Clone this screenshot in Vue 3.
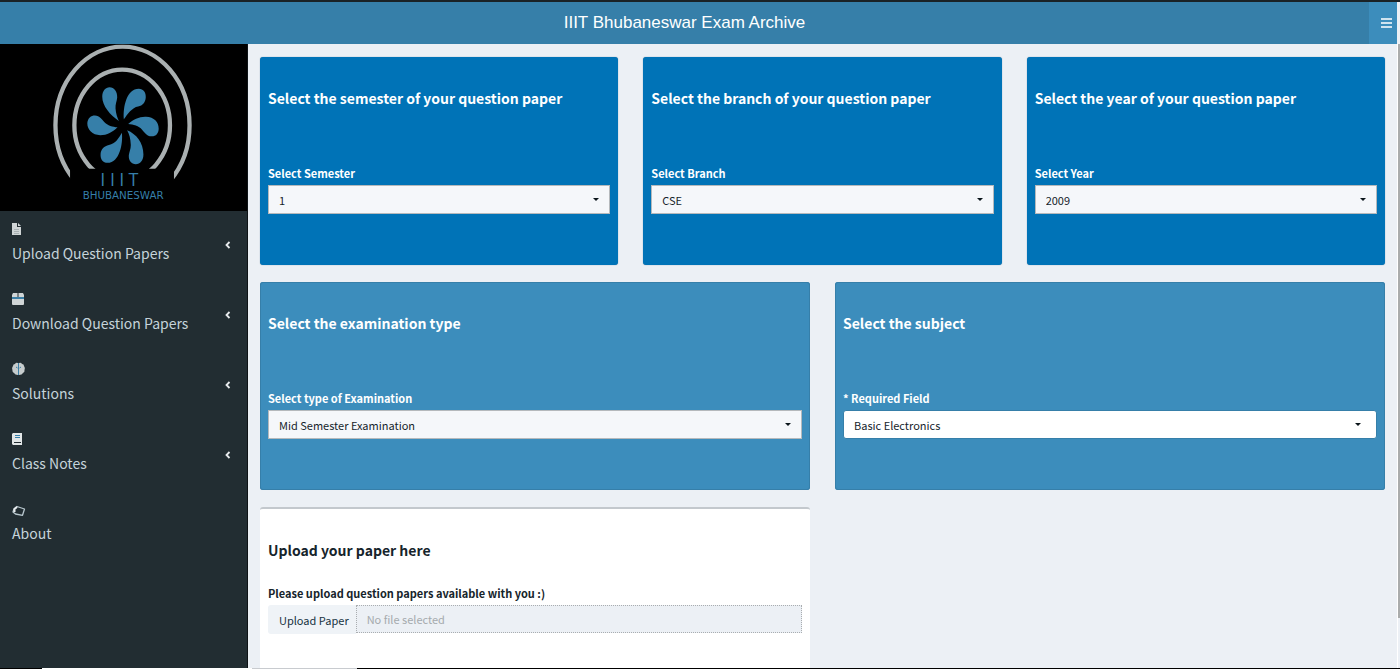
<script setup>
import { ref } from 'vue'

const menu = [
  { label: 'Upload Question Papers', icon: 'file', expandable: true },
  { label: 'Download Question Papers', icon: 'box', expandable: true },
  { label: 'Solutions', icon: 'brain', expandable: true },
  { label: 'Class Notes', icon: 'notes', expandable: true },
  { label: 'About', icon: 'tag', expandable: false },
]

const selectors = [
  { id: 'semester', title: 'Select the semester of your question paper', label: 'Select Semester', options: ['1', '2', '3', '4', '5', '6', '7', '8'], tone: 'blue' },
  { id: 'branch', title: 'Select the branch of your question paper', label: 'Select Branch', options: ['CSE', 'IT', 'ETC', 'EEE'], tone: 'blue' },
  { id: 'year', title: 'Select the year of your question paper', label: 'Select Year', options: ['2009', '2010', '2011', '2012'], tone: 'blue' },
  { id: 'exam', title: 'Select the examination type', label: 'Select type of Examination', options: ['Mid Semester Examination', 'End Semester Examination'], tone: 'light' },
  { id: 'subject', title: 'Select the subject', label: '* Required Field', options: ['Basic Electronics'], tone: 'light', plain: true },
]

const values = ref(Object.fromEntries(selectors.map((s) => [s.id, s.options[0]])))
const fileInput = ref(null)
const fileName = ref('')

function onFile(event) {
  fileName.value = event.target.files[0]?.name ?? ''
}
</script>

<template>
  <div class="app">
    <header class="topbar">
      <h1 class="brand">IIIT Bhubaneswar Exam Archive</h1>
      <button class="burger" type="button" aria-label="Toggle sidebar">
        <svg width="11" height="10" viewBox="0 0 11 10"><path d="M0 1h11M0 5h11M0 9h11" stroke="#fff" stroke-width="1.600" /></svg>
      </button>
      <span class="topbar-end"></span>
    </header>

    <div class="body">
      <aside class="sidebar">
        <div class="logo">
          <svg viewBox="-2 132 744 501" role="img" aria-label="IIIT Bhubaneswar">
            <defs>
              <clipPath id="outer-arc"><path d="M0 132H744V633H522V480H209V633H0Z" /></clipPath>
              <clipPath id="inner-arc"><path d="M0 132H744V507H0Z" /></clipPath>
            </defs>
            <ellipse cx="367" cy="376" rx="202" ry="237" fill="none" stroke="#aab0b1" stroke-width="13" clip-path="url(#outer-arc)" />
            <ellipse cx="366" cy="376" rx="144" ry="168" fill="none" stroke="#aab0b1" stroke-width="13" clip-path="url(#inner-arc)" />
            <g fill="#367fa9">
              <path d="M356 363C330 345 306 318 306 290C306 272 316 261 328 261C342 261 352 274 351 292C350 304 345 312 346 325C347 340 351 352 356 363Z" />
              <path d="M371 358C368 320 380 266 416 266C430 266 438 278 437 292C436 306 428 317 414 319C396 322 382 342 371 358Z" />
              <path d="M384 372C400 358 418 349 438 350C462 351 476 366 476 386C476 400 467 410 454 409C440 408 434 398 426 389C416 378 400 373 384 372Z" />
              <path d="M381 391C408 402 430 428 430 464C430 482 420 493 407 493C394 493 385 482 386 466C387 456 392 448 392 435C391 416 388 404 381 391Z" />
              <path d="M365 398C369 430 358 489 322 489C308 489 300 478 301 462C302 448 312 438 326 435C346 431 356 414 365 398Z" />
              <path d="M352 382C338 396 320 406 300 406C276 405 261 390 261 370C262 354 272 346 284 346C298 347 306 358 312 366C322 377 338 381 352 382Z" />
              <text class="logo-name" x="300 329 357 385" y="560">IIIT</text>
              <text class="logo-city" x="369" y="599" text-anchor="middle">BHUBANESWAR</text>
            </g>
          </svg>
        </div>
        <nav class="menu">
          <a v-for="item in menu" :key="item.label" class="item" href="#">
            <span class="item-main">
              <svg class="icon" width="14" height="14" viewBox="0 0 14 14">
                <g v-if="item.icon === 'file'">
                  <path d="M0 1H5V5H9V13H0Z" fill="#d0d5d6" />
                  <path d="M6 1L9 4H6Z" fill="#d0d5d6" />
                  <path d="M2 7.500H7M2 9.500H7M2 11.500H7" stroke="#a9b1b3" stroke-width="1" />
                </g>
                <g v-else-if="item.icon === 'box'">
                  <path d="M1 1H5.500V5H0V3Z" fill="#d0d5d6" />
                  <path d="M6.500 1H11L12 3V5H6.500Z" fill="#d0d5d6" />
                  <path d="M0 5H12V7H0Z" fill="#3c7fa6" />
                  <path d="M0 7H12V12Q12 13 11 13H1Q0 13 0 12Z" fill="#d0d5d6" />
                </g>
                <g v-else-if="item.icon === 'brain'">
                  <path d="M6 1Q4 0 3 2Q1 2 1 4Q-.5 6 .5 8Q0 10 2 11Q3 13 6 13Z" fill="#c6cccd" />
                  <path d="M7 1Q9 0 10 2Q12 2 12 4Q13.500 6 12.500 8Q13 10 11 11Q10 13 7 13Z" fill="#c6cccd" />
                  <path d="M6.500 1V13M4 5L5.500 6M9 5L7.500 6" stroke="#3c7fa6" />
                </g>
                <g v-else-if="item.icon === 'notes'">
                  <path d="M1 1H10V13H1L0 12V2Z" fill="#e2e6e7" />
                  <path d="M3 3.500H8M3 5.500H8" stroke="#367fa9" />
                  <path d="M2 10.500H9" stroke="#222d32" />
                </g>
                <g v-else fill="none" stroke="#b8c7ce">
                  <path d="M5 4.500L12.500 7L10.500 13.300L3.500 12L1 10L2 7Z" stroke-width="1.300" stroke-linejoin="round" />
                  <path d="M2.500 10V7L5 5" stroke="#e8ecee" stroke-width="2" />
                </g>
              </svg>
              <span class="item-label">{{ item.label }}</span>
            </span>
            <svg v-if="item.expandable" class="chevron" width="6" height="8" viewBox="0 0 6 8"><path d="M4.500 1L1.500 4L4.500 7" fill="none" stroke="#e8ecee" stroke-width="1.800" /></svg>
          </a>
        </nav>
      </aside>

      <main class="content">
        <section v-for="s in selectors" :key="s.id" class="card" :class="[s.tone, s.tone === 'blue' ? 'third' : 'half']">
          <h2>{{ s.title }}</h2>
          <label :for="s.id">{{ s.label }}</label>
          <div class="select" :class="{ plain: s.plain }">
            <select :id="s.id" v-model="values[s.id]">
              <option v-for="o in s.options" :key="o">{{ o }}</option>
            </select>
            <svg class="caret" width="6" height="3" viewBox="0 0 6 3"><path d="M0 0H6L3 3Z" fill="#0b151a" /></svg>
          </div>
        </section>

        <section class="card white half">
          <h2>Upload your paper here</h2>
          <label for="paper-name">Please upload question papers available with you :)</label>
          <div class="upload">
            <button type="button" @click="fileInput.click()">Upload Paper</button>
            <input id="paper-name" type="text" readonly placeholder="No file selected" :value="fileName" />
            <input ref="fileInput" class="picker" type="file" aria-label="Upload Paper" @change="onFile" />
          </div>
        </section>
      </main>

      <div class="scroll"><div class="thumb"></div></div>
    </div>
    <div class="bottom"><i></i><i></i><i></i><i></i></div>
  </div>
</template>

<style>
body {
  margin: 0;
  background: #ecf0f5;
}
</style>

<style scoped>
* {
  box-sizing: border-box;
}
.app {
  display: flex;
  flex-direction: column;
  height: 100vh;
  overflow: hidden;
  font-family: "Noto Sans CJK SC", "Noto Sans", sans-serif;
  font-size: 11px;
  color: #16242b;
}
.topbar {
  display: flex;
  flex: none;
  height: 44px;
  border-top: 2px solid #1a2226;
  background: #367fa9;
}
.brand {
  flex: 1;
  margin: 0;
  text-align: center;
  font: 400 17px/41px "Liberation Sans", Arial, sans-serif;
  color: #fff;
}
.burger {
  width: 28px;
  padding: 0 5px 0 12px;
  border: 0;
  background: #3c8dbc;
  display: flex;
  align-items: center;
}
.topbar-end {
  width: 3px;
  background: #ecf0f5;
}
.body {
  flex: 1;
  min-height: 0;
  display: flex;
}
.sidebar {
  flex: none;
  width: 248px;
  background: #222d32;
  border-right: 1px solid #0e1316;
}
.logo {
  background: #000;
  height: 167px;
}
.logo svg {
  display: block;
  width: 100%;
  height: 100%;
}
.logo-name {
  font: 400 54px "Open Sans", sans-serif;
}
.logo-city {
  font: 400 31px "DejaVu Sans", sans-serif;
}
.menu {
  display: flex;
  flex-direction: column;
}
.item {
  display: flex;
  align-items: flex-start;
  justify-content: space-between;
  height: 70px;
  padding: 11px 16px 0 12px;
  color: #c5d3da;
  text-decoration: none;
}
.item-main {
  display: flex;
  flex-direction: column;
  gap: 5px;
}
.item-label {
  font-size: 14px;
  line-height: 24px;
}
.icon {
  display: block;
}
.chevron {
  margin-top: 19px;
}
.content {
  flex: 1;
  min-width: 0;
  display: grid;
  grid-template-columns: repeat(6, 1fr);
  grid-auto-rows: max-content;
  column-gap: 25px;
  row-gap: 17px;
  padding: 13px 12px 0;
}
.third {
  grid-column: span 2;
}
.half {
  grid-column: span 3;
}
.card {
  padding: 29px 8px 51px;
  border-radius: 3px;
  color: #fff;
}
.blue {
  background: #0073b7;
  box-shadow: 0 0 1px #5c7f96;
}
.light {
  background: #3c8dbc;
  box-shadow: inset 0 0 0 1px #367fa9;
}
.white {
  background: #fff;
  color: #16242b;
  border-top: 2px solid #c3c8cd;
  padding-bottom: 60px;
}
h2 {
  margin: 0 0 54px;
  font-size: 14px;
  line-height: 24px;
  font-weight: 700;
}
label {
  display: block;
  font-size: 11px;
  line-height: 18px;
  margin-bottom: 3px;
  font-weight: 700;
}
.white h2 {
  margin-bottom: 22px;
}
.select {
  position: relative;
}
select {
  display: block;
  appearance: none;
  width: 100%;
  height: 29px;
  padding: 0 10px;
  border: 1px solid #b5b9bc;
  border-radius: 0;
  background: #f5f7fa;
  font: inherit;
  color: #16242b;
}
.plain select {
  background: #fff;
  border-color: #367fa9;
  border-radius: 3px;
}
.caret {
  position: absolute;
  right: 11px;
  top: 13px;
  pointer-events: none;
}
.plain .caret {
  right: 16px;
}
.upload {
  display: flex;
}
.upload button {
  flex: none;
  height: 29px;
  padding: 0 7px 0 11px;
  border: 0;
  border-radius: 3px 0 0 3px;
  background: #eff3f7;
  font: inherit;
  color: #16323f;
}
.upload input[type="text"] {
  flex: 1;
  min-width: 0;
  height: 28px;
  padding: 0 10px;
  border: 1px dotted #a9adb0;
  border-radius: 0;
  background: #ecf0f5;
  font: inherit;
}
.upload input::placeholder {
  color: #a5aaad;
  opacity: 1;
}
.upload .picker {
  display: none;
}
.scroll {
  flex: none;
  width: 3px;
  border-left: 1px solid #fff;
  background: #ecf0f5;
}
.thumb {
  height: 92%;
  background: #aaacac;
}
.bottom {
  flex: none;
  display: grid;
  grid-template-columns: 6fr 30fr 15fr 149fr;
  height: 1px;
}
.bottom i:nth-child(1),
.bottom i:nth-child(4) {
  background: #000;
}
.bottom i:nth-child(2) {
  background: #fff;
}
.bottom i:nth-child(3) {
  background: #c8cbcf;
}
</style>
